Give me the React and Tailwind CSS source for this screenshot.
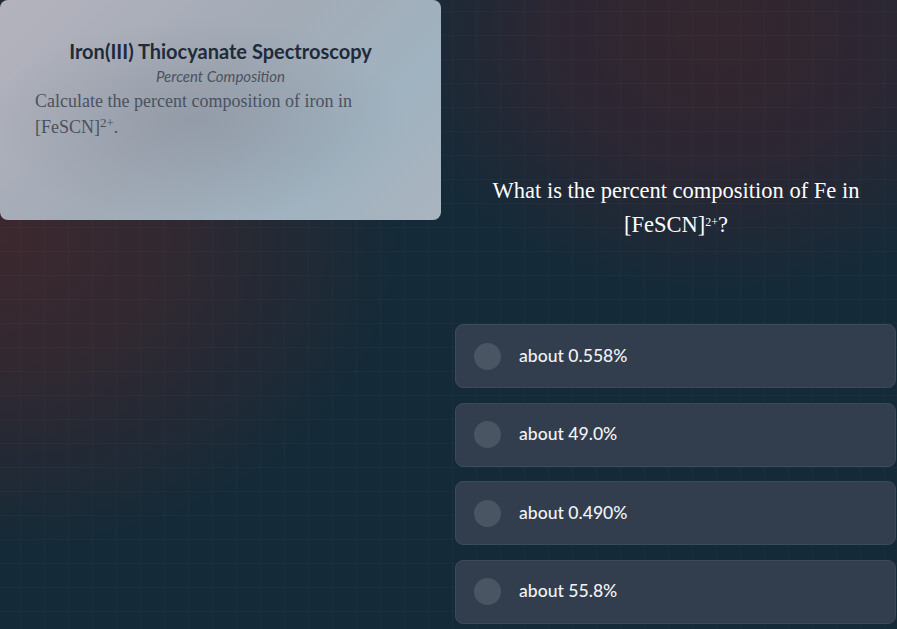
const options = ['about 0.558%', 'about 49.0%', 'about 0.490%', 'about 55.8%']

const OptionRow = ({ label }) => (
  <div className="flex items-center h-[64px] rounded-lg border border-[#3d4a5b] bg-[#323d4d] pl-[18px]">
    <div className="w-[27px] h-[27px] rounded-full bg-[#4a5564]" />
    <span className="ml-[18px] text-[17.6px] font-medium text-[#f1f3f5]">{label}</span>
  </div>
)

export default function App() {
  return (
    <div
      className="relative w-[897px] h-[629px] overflow-hidden bg-[#142a38]"
      style={{ fontFamily: 'Lato, "Open Sans", sans-serif' }}
    >
      {/* background glows */}
      <div className="absolute inset-0 bg-[radial-gradient(ellipse_45%_50%_at_0%_38%,rgba(60,40,46,1)_0%,rgba(60,40,46,0.75)_40%,rgba(60,40,46,0)_100%)]" />
      <div className="absolute inset-0 bg-[radial-gradient(ellipse_38%_42%_at_80%_5%,rgba(52,38,46,1)_0%,rgba(48,38,50,0.85)_50%,rgba(46,38,50,0)_100%)]" />
      <div className="absolute inset-0 bg-[linear-gradient(rgba(255,255,255,0.025)_1px,transparent_1px),linear-gradient(90deg,rgba(255,255,255,0.025)_1px,transparent_1px)] bg-[size:24px_24px] bg-[position:20px_11px]" />

      <div className="relative flex h-full">
        {/* Problem card */}
        <div className="w-[441px] h-[220px] shrink-0 rounded-lg overflow-hidden bg-[linear-gradient(135deg,#b4b3bd_0%,#a2abb6_45%,#a0b3c0_75%,#a9b4be_100%)]">
          <div className="h-full px-[35px] pt-[37px] bg-[radial-gradient(ellipse_at_45%_55%,rgba(120,125,140,0.35)_0%,rgba(120,125,140,0)_60%)]">
            <h1 className="text-center text-[20px] font-bold text-[#1f2a3a] leading-[28px]">
              Iron(III) Thiocyanate Spectroscopy
            </h1>
            <p className="text-center text-[15px] italic text-[#4a5260] leading-[22px]">
              Percent Composition
            </p>
            <p
              className="mt-[1px] w-[360px] text-[18px] leading-[26px] text-[#4a5260]"
              style={{ fontFamily: '"Liberation Serif", "Times New Roman", serif' }}
            >
              Calculate the percent composition of iron in [FeSCN]<sup className="text-[13px]">2+</sup>.
            </p>
          </div>
        </div>

        {/* Question */}
        <div className="ml-[14px] flex-1 flex flex-col">
          <p
            className="mt-[174px] text-center text-[22.5px] leading-[34px] text-white px-[20px]"
            style={{ fontFamily: '"Liberation Serif", "Times New Roman", serif' }}
          >
            What is the percent composition of Fe in [FeSCN]<sup className="text-[12px]">2+</sup>?
          </p>
          <div className="mt-[82px] flex flex-col gap-[14.5px] mr-[1px]">
            {options.map((o) => (
              <OptionRow key={o} label={o} />
            ))}
          </div>
        </div>
      </div>
    </div>
  )
}
